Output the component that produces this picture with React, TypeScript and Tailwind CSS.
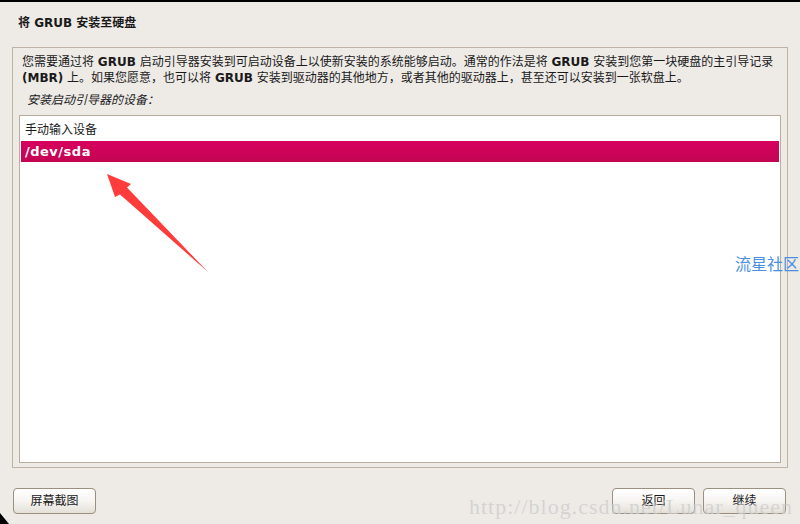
const font = "font-['DejaVu_Sans','Noto_Sans_CJK_SC',sans-serif]";

function Button({ label }: { label: string }) {
  return (
    <button className="h-[26px] w-[83px] rounded-[4px] border border-[#9b8f80] bg-gradient-to-b from-[#ffffff] via-[#f7f5f2] to-[#e4dfd8] text-[12px] text-[#1a1a1a] shadow-[inset_0_1px_0_#fff]">
      {label}
    </button>
  );
}

function Arrow() {
  return (
    <svg className="absolute left-0 top-0" width="800" height="524" viewBox="0 0 800 524">
      <path
        d="M107 172 L131 182 L127 185.5 L208 270 L120 192.5 L115 195 Z"
        fill="#ff3c3c"
      />
    </svg>
  );
}

export default function App() {
  return (
    <div className={`relative flex h-[524px] w-[800px] flex-col overflow-hidden border-t-2 border-black bg-[#eeebe7] ${font}`}>
      <div className="h-[45px] pl-[18px] pt-[12px] text-[12px] font-bold text-[#1a1a1a]">将 GRUB 安装至硬盘</div>

      <div className="mx-[12px] flex h-[421px] w-[776px] flex-col border border-[#bdb2a4] px-[6px] pb-[4px]">
        <div className="pl-[3px] pt-[6px] text-[12px] leading-[16px] text-[#1a1a1a]">
          <p>
            您需要通过将 <b>GRUB</b> 启动引导器安装到可启动设备上以使新安装的系统能够启动。通常的作法是将 <b>GRUB</b> 安装到您第一块硬盘的主引导记录
          </p>
          <p>
            <b>(MBR)</b> 上。如果您愿意，也可以将 <b>GRUB</b> 安装到驱动器的其他地方，或者其他的驱动器上，甚至还可以安装到一张软盘上。
          </p>
        </div>
        <div className="mt-[6px] pl-[8px] text-[12px] italic leading-[16px] text-[#1a1a1a]">安装启动引导器的设备：</div>
        <div className="mt-[7px] flex flex-1 flex-col border border-[#b9ad9e] bg-white px-[1px]">
          <div className="flex h-[25px] items-center pl-[4px] pt-[2px] text-[12px] text-[#1a1a1a]">手动输入设备</div>
          <div className="flex h-[21px] items-center bg-gradient-to-b from-[#d8005e] to-[#c20553] pl-[4px] text-[13px] font-bold tracking-[0.5px] text-white">
            /dev/sda
          </div>
        </div>
      </div>

      <div className="flex flex-1 items-start justify-between px-[13px] pt-[20px]">
        <Button label="屏幕截图" />
        <div className="flex gap-[8px] pr-[1px]">
          <Button label="返回" />
          <Button label="继续" />
        </div>
      </div>

      <Arrow />

      <div className="absolute left-[735px] top-[251px] text-[16px] text-[#4a8fe0]">流星社区</div>
      <div className="pointer-events-none absolute left-[469px] top-[488px] font-['Liberation_Serif',serif] text-[22px] tracking-[1px] text-[#cccccc]/75">
        http://blog.csdn.net/Lunar_queen
      </div>
      <div className="absolute bottom-0 left-0 h-0 w-0 border-b-[11px] border-r-[9px] border-b-black border-r-transparent" />
    </div>
  );
}
